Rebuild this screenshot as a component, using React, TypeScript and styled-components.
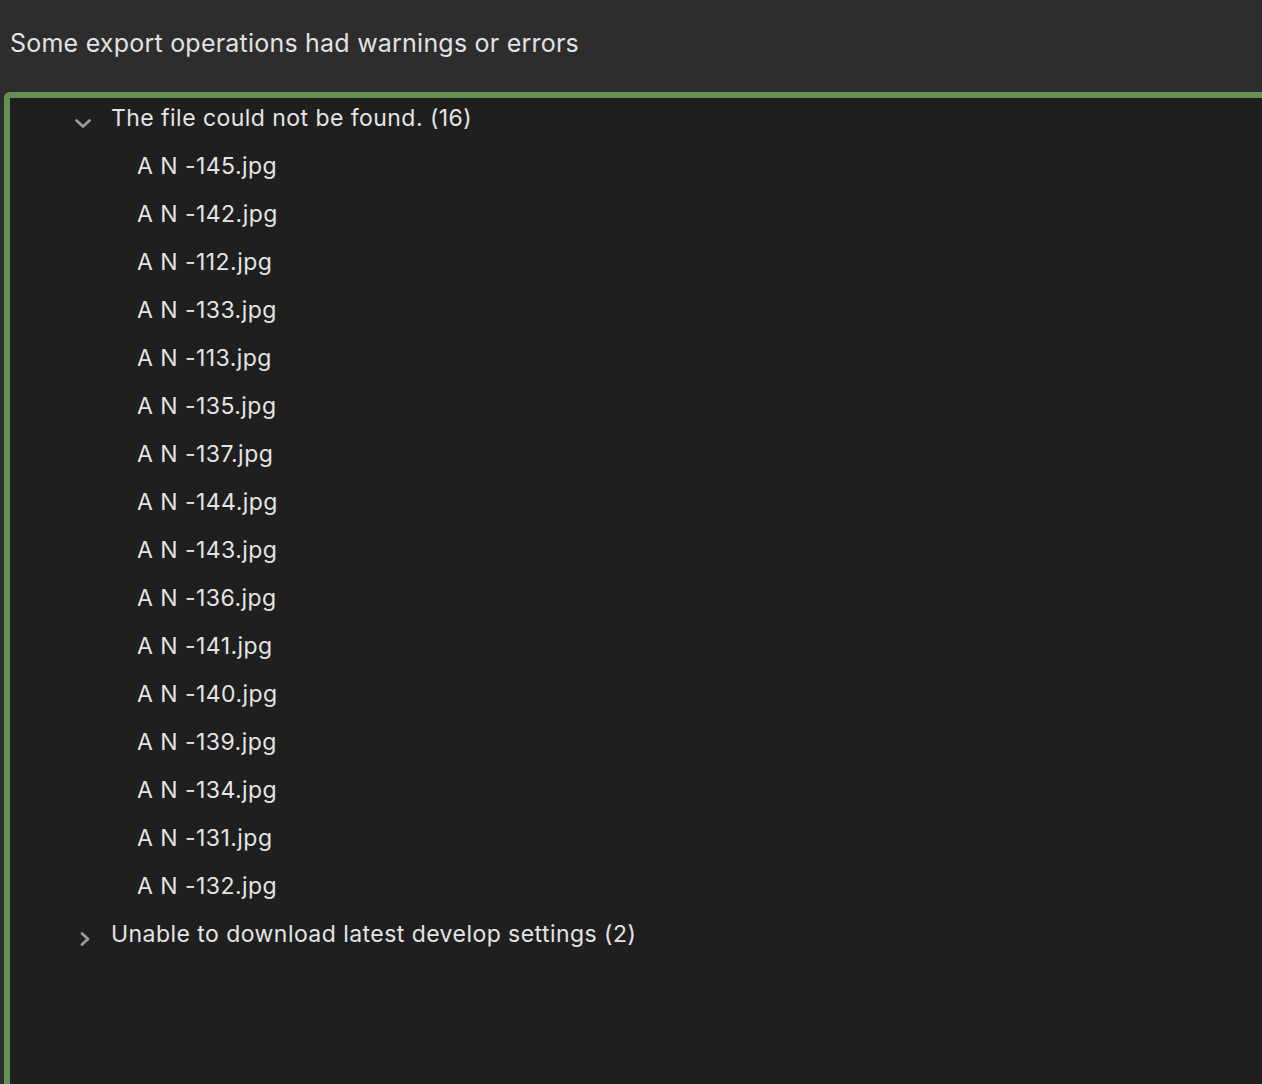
import React from 'react';
import styled, { createGlobalStyle } from 'styled-components';

const GlobalStyle = createGlobalStyle`
	html, body {
		margin: 0;
		padding: 0;
		background: #2d2d2d;
		font-family: Inter, "Open Sans", "Liberation Sans", sans-serif;
	}
	#root {
		height: 1084px;
		overflow: hidden;
	}
`;

const Page = styled.div`
	display: flex;
	flex-direction: column;
	height: 1084px;
	background: #2d2d2d;
`;

const TitleBar = styled.div`
	display: flex;
	align-items: center;
	height: 92px;
	padding: 0 0 6px 10px;
	box-sizing: border-box;
	font-size: 25px;
	letter-spacing: 0.22px;
	color: #e2e2e2;
`;

const Panel = styled.div`
	flex: 1;
	margin-left: 4px;
	margin-right: -10px;
	background: #1f1f1f;
	border: 6px solid #649152;
	border-bottom: none;
	border-top-left-radius: 6px;
	border-top-right-radius: 6px;
`;

const List = styled.div`
	display: flex;
	flex-direction: column;
	margin-top: -4px;
`;

type RowProps = {
	$indent: number;
};

const Row = styled.div<RowProps>`
	display: flex;
	align-items: center;
	height: 48px;
	padding-left: ${(props: RowProps) => props.$indent}px;
	font-size: 23px;
	letter-spacing: 0.45px;
	color: #e4e4e4;
	white-space: nowrap;
`;

type ToggleProps = {
	$shift: number;
};

const Toggle = styled.span<ToggleProps>`
	display: flex;
	align-items: center;
	justify-content: center;
	width: 48px;
	padding-top: 10px;
	padding-right: ${(props: ToggleProps) => props.$shift}px;
	box-sizing: border-box;
`;

const files = [
	'145', '142', '112', '133', '113', '135', '137', '144',
	'143', '136', '141', '140', '139', '134', '131', '132',
];

const ChevronDown = () => (
	<svg width="18" height="11" viewBox="0 0 18 11">
		<path d="M2.5 2.5 L9 8.5 L15.5 2.5" fill="none" stroke="#9a9a9a" strokeWidth="2.8" strokeLinecap="round" strokeLinejoin="round" />
	</svg>
);

const ChevronRight = () => (
	<svg width="12" height="16" viewBox="0 0 12 16">
		<path d="M3 2.5 L9 8 L3 13.5" fill="none" stroke="#9a9a9a" strokeWidth="2.8" strokeLinecap="round" strokeLinejoin="round" />
	</svg>
);

const App: React.FC = () => {
	return (
		<Page>
			<GlobalStyle />
			<TitleBar>Some export operations had warnings or errors</TitleBar>
			<Panel>
				<List>
					<Row $indent={53}>
						<Toggle $shift={8}>
							<ChevronDown />
						</Toggle>
						The file could not be found. (16)
					</Row>
					{files.map((n) => (
						<Row key={n} $indent={127}>
							A N -{n}.jpg
						</Row>
					))}
					<Row $indent={53}>
						<Toggle $shift={4}>
							<ChevronRight />
						</Toggle>
						Unable to download latest develop settings (2)
					</Row>
				</List>
			</Panel>
		</Page>
	);
};

export default App;
